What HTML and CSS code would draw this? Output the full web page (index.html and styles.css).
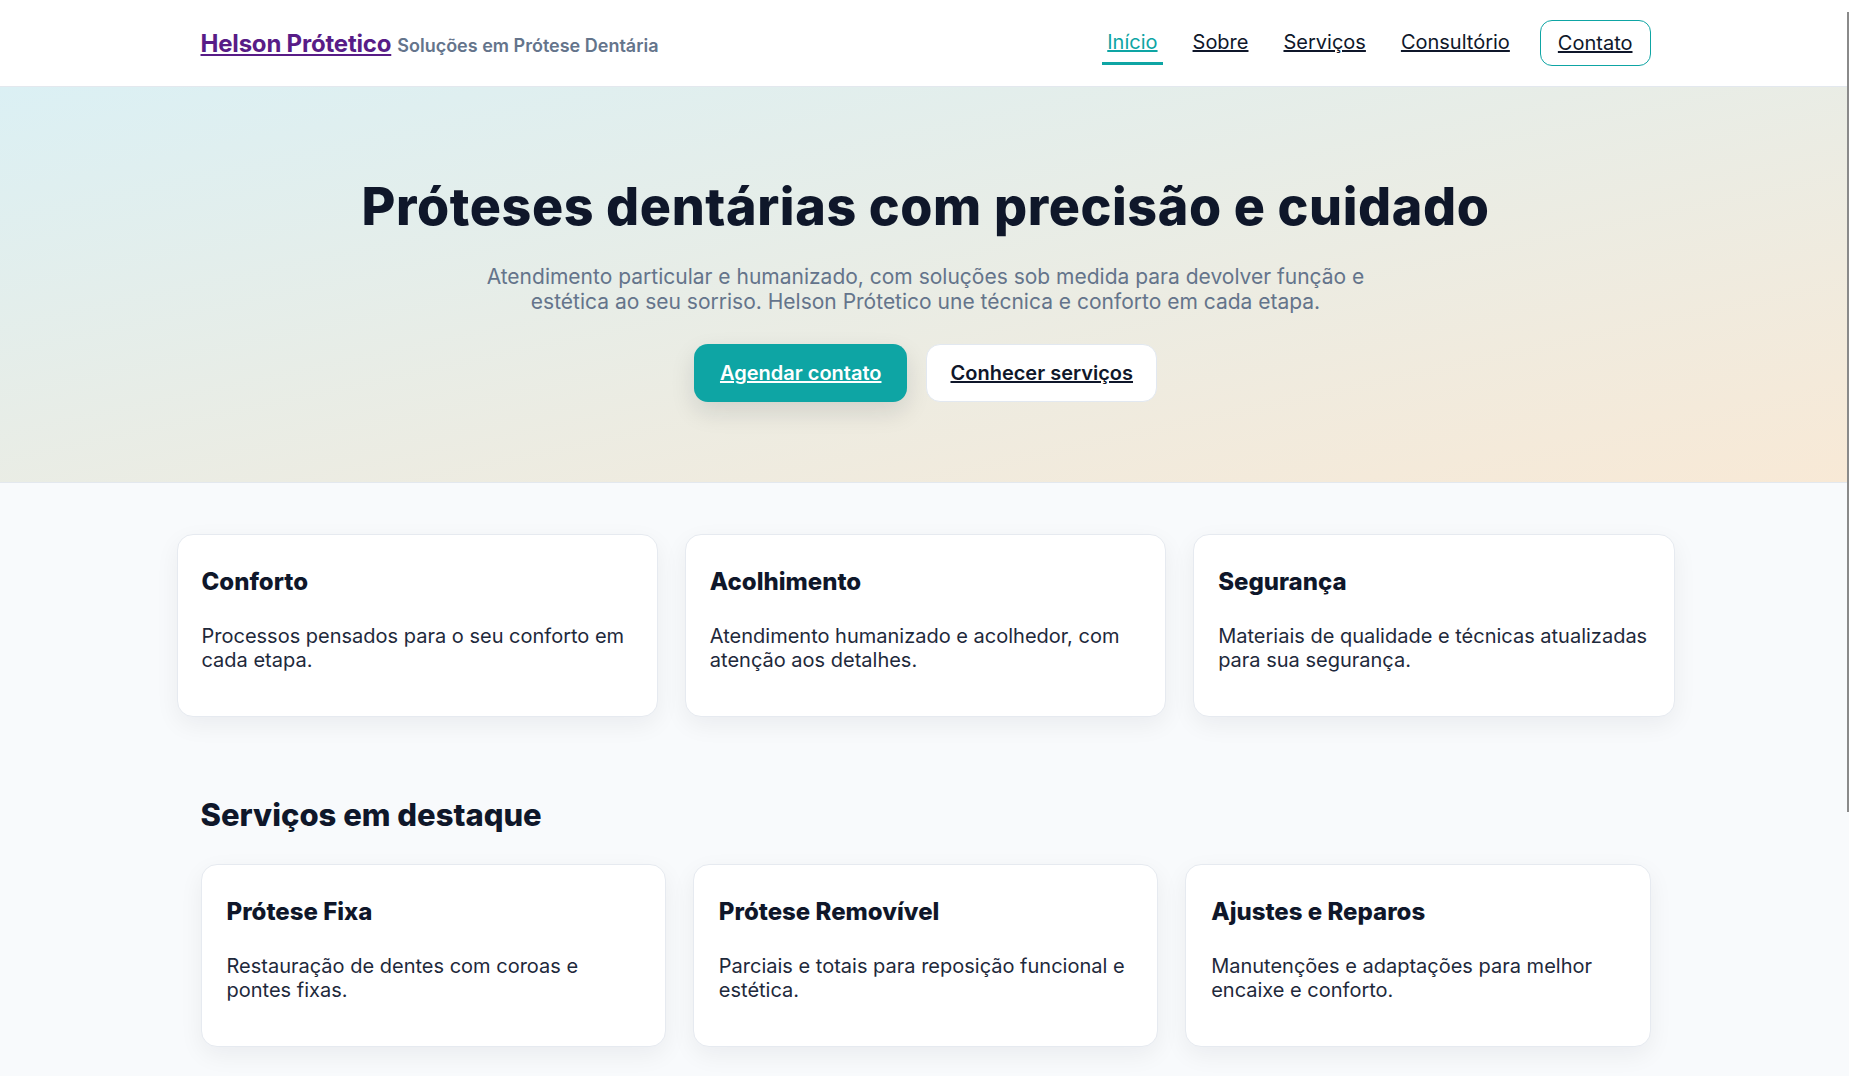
FILE: index.html
```html
<!DOCTYPE html>
<html lang="pt-BR">
<head>
<meta charset="utf-8">
<title>Helson Prótetico — Soluções em Prótese Dentária</title>
<link rel="stylesheet" href="styles.css">
</head>
<body>
<header class="site-header">
  <div class="container header-inner">
    <div class="brand">
      <a class="brand-name" href="#">Helson Prótetico</a>
      <span class="brand-tag">Soluções em Prótese Dentária</span>
    </div>
    <nav class="nav">
      <a class="nav-link is-active" href="#">Início</a>
      <a class="nav-link" href="#">Sobre</a>
      <a class="nav-link" href="#">Serviços</a>
      <a class="nav-link" href="#">Consultório</a>
      <a class="nav-cta" href="#">Contato</a>
    </nav>
  </div>
</header>

<section class="hero">
  <h1 class="hero-title">Próteses dentárias com precisão e cuidado</h1>
  <p class="hero-lead">Atendimento particular e humanizado, com soluções sob medida para devolver função e estética ao seu sorriso. Helson Prótetico une técnica e conforto em cada etapa.</p>
  <div class="hero-actions">
    <a class="btn btn-primary" href="#">Agendar contato</a>
    <a class="btn btn-light" href="#">Conhecer serviços</a>
  </div>
</section>

<main class="main">
  <section class="features">
    <article class="card">
      <h3 class="card-title">Conforto</h3>
      <p class="card-text">Processos pensados para o seu conforto em cada etapa.</p>
    </article>
    <article class="card">
      <h3 class="card-title">Acolhimento</h3>
      <p class="card-text">Atendimento humanizado e acolhedor, com atenção aos detalhes.</p>
    </article>
    <article class="card">
      <h3 class="card-title">Segurança</h3>
      <p class="card-text">Materiais de qualidade e técnicas atualizadas para sua segurança.</p>
    </article>
  </section>

  <section class="container services">
    <h2 class="section-title">Serviços em destaque</h2>
    <div class="services-grid">
      <article class="card">
        <h3 class="card-title">Prótese Fixa</h3>
        <p class="card-text">Restauração de dentes com coroas e pontes fixas.</p>
      </article>
      <article class="card">
        <h3 class="card-title">Prótese Removível</h3>
        <p class="card-text">Parciais e totais para reposição funcional e estética.</p>
      </article>
      <article class="card">
        <h3 class="card-title">Ajustes e Reparos</h3>
        <p class="card-text">Manutenções e adaptações para melhor encaixe e conforto.</p>
      </article>
    </div>
  </section>
</main>

<div class="scroll-thumb" aria-hidden="true"></div>
</body>
</html>
```

FILE: styles.css
```css
* { box-sizing: border-box; }

html, body { margin: 0; padding: 0; }

body {
  font-family: Inter, "Liberation Sans", sans-serif;
  color: #0f172a;
  background: #f8fafc;
}

.container {
  width: 1450px;
  margin-left: calc(50% - 724px);
}

/* Header */
.site-header {
  background: #ffffff;
  border-bottom: 1px solid #e3e8ee;
}

.header-inner {
  height: 86px;
  display: flex;
  align-items: center;
  justify-content: space-between;
}

.brand {
  display: flex;
  align-items: baseline;
  gap: 6px;
  padding-top: 1px;
}

.brand-name {
  font-size: 24px;
  font-weight: 700;
  color: #581c87;
  letter-spacing: -0.2px;
}

.brand-tag {
  font-size: 18px;
  font-weight: 600;
  color: #64748b;
}

.nav {
  display: flex;
  align-items: center;
  gap: 25px;
}

.nav-link {
  font-size: 20px;
  line-height: 24px;
  color: #0f172a;
  padding: 9px 5px 8px;
  border-bottom: 3px solid transparent;
}

.nav-link.is-active {
  color: #0ea5a4;
  border-bottom-color: #0ea5a4;
}

.nav-cta {
  font-size: 20px;
  line-height: 24px;
  color: #0f172a;
  background: #ffffff;
  border: 1px solid #0ea5a4;
  border-radius: 12px;
  padding: 10px 17px;
}

/* Hero */
.hero {
  background: linear-gradient(to bottom right, #dbf0f4, #f8e9d6);
  border-bottom: 1px solid #e3e8ee;
  text-align: center;
  padding: 90px 0 80px 2px;
}

.hero-title {
  margin: 0;
  font-size: 52px;
  line-height: 1.15;
  font-weight: 800;
  letter-spacing: 0.6px;
  color: #0f172a;
}

.hero-lead {
  margin: 27px auto 0;
  max-width: 900px;
  font-size: 21px;
  line-height: 25px;
  color: #64748b;
}

.hero-actions {
  margin-top: 30px;
  display: flex;
  justify-content: center;
  gap: 19px;
}

.btn {
  font-size: 20px;
  line-height: 24px;
  font-weight: 600;
  border-radius: 14px;
  padding: 17px 26px;
}

.btn-primary {
  background: #0ea5a4;
  color: #ffffff;
  box-shadow: 0 10px 24px rgba(15, 23, 42, 0.12);
}

.btn-light {
  background: #ffffff;
  color: #0f172a;
  border: 1px solid #e2e8f0;
  padding: 16px 23px;
}

/* Cards */
.main {
  padding: 51px 0 80px;
}

.features {
  width: 1498px;
  margin-left: calc(50% - 748px);
  display: grid;
  grid-template-columns: repeat(3, 1fr);
  gap: 27px;
}

.card {
  background: #ffffff;
  border: 1px solid #e6eaf0;
  border-radius: 16px;
  padding: 32px 24px 43px;
  min-height: 183px;
  box-shadow: 0 8px 24px rgba(15, 23, 42, 0.06);
}

.card-title {
  margin: 0 0 27px;
  font-size: 24px;
  line-height: 30px;
  font-weight: 800;
  color: #0f172a;
}

.card-text {
  margin: 0;
  font-size: 20px;
  line-height: 24px;
  color: #1e293b;
}

.services {
  padding-top: 80px;
}

.section-title {
  margin: 0 0 31px;
  font-size: 31px;
  line-height: 36px;
  font-weight: 800;
  color: #0f172a;
}

.services-grid {
  display: grid;
  grid-template-columns: repeat(3, 1fr);
  gap: 27px;
}

.services-grid .card {
  padding-left: 25px;
}

.scroll-thumb {
  position: fixed;
  top: 12px;
  right: 0;
  width: 2px;
  height: 800px;
  background: #8a8a8a;
}
```
